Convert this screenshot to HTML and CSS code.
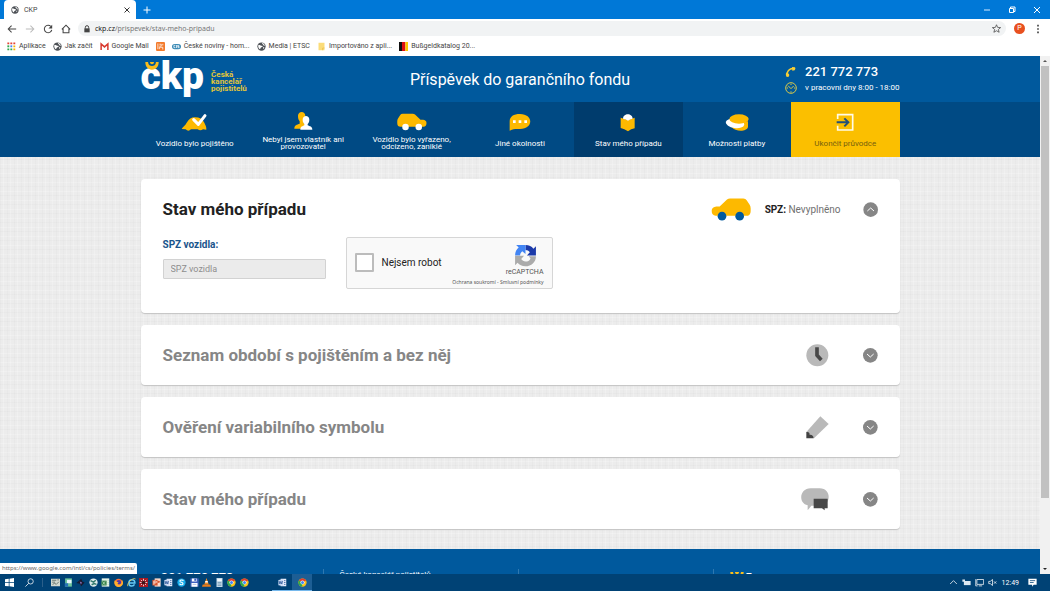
FILE: index.html
```html
<!DOCTYPE html>
<html lang="cs">
<head>
<meta charset="utf-8">
<title>CKP</title>
<link rel="stylesheet" href="styles.css">
</head>
<body>
<svg class="sprite" aria-hidden="true">
  <symbol id="globe" viewBox="0 0 24 24"><circle cx="12" cy="12" r="11" fill="#4d5156"/><path d="M4 7c5 0 5 3 9 3s2 4-1 4-2 5-5 5C4 16 2 11 4 7zM13 2c0 4 3 3 4 6s4 2 4 2c-1-4-4-7-8-8zM16 14l4 0-4 5z" fill="#fff"/></symbol>
  <symbol id="chrome" viewBox="0 0 24 24"><circle cx="12" cy="12" r="11" fill="#fbc116"/><path d="M12 12L2.500 6.500A11 11 0 0 1 21.500 6.500z" fill="#e33b2e"/><path d="M12 12L2.500 6.500A11 11 0 0 0 11 23z" fill="#2da94f"/><circle cx="12" cy="12" r="5.500" fill="#fff"/><circle cx="12" cy="12" r="4" fill="#4285f4"/></symbol>
  <symbol id="word" viewBox="0 0 24 24"><path d="M7 2h15v20H7z" fill="#e8eefb"/><path d="M1 5l13-2v18L1 19z" fill="#c9d8f2"/><path d="M3 8l2 8 2.500-7 2.500 7 2-8M16 7h4M16 12h4M16 17h4" fill="none" stroke="#2b579a" stroke-width="2"/></symbol>
  <symbol id="car" viewBox="0 0 120 68"><path d="M2 38c0-9 6-12 14-13h10L48 4q4-3 9-3h40q7 0 10 5l9 14q3 5 3 11v8q0 14-14 14H14Q2 52 2 38z" fill="#fdb900"/><circle cx="33" cy="54" r="13" fill="currentColor"/><circle cx="86" cy="54" r="13" fill="currentColor"/></symbol>
  <symbol id="down" viewBox="0 0 45 45"><circle cx="22" cy="22" r="22" fill="#868686"/><path d="M12 18l10 9 10-9" fill="none" stroke="#fff" stroke-width="3"/></symbol>
  <symbol id="smile" viewBox="0 0 42 24"><path d="M1 0h8c1 9 6 12 12 12s11-3 12-12h8c0 14-8 23-20 23S1 14 1 0z" fill="#f9bd1b"/><path d="M15 0h12c0 9-12 9-12 0z" fill="#f9bd1b"/></symbol>
</svg>

<header class="browser">
  <div class="tabstrip">
    <div class="tab"><svg class="i8"><use href="#globe"/></svg><span>CKP</span><button class="plain close" aria-label="Zavřít kartu"><svg class="i8" viewBox="0 0 16 16"><path d="M3 3l10 10M13 3L3 13" stroke="#333" stroke-width="2"/></svg></button></div>
    <button class="plain newtab" aria-label="Nová karta"><svg class="i8" viewBox="0 0 16 16"><path d="M8 1v14M1 8h14" stroke="#fff" stroke-width="2"/></svg></button>
    <div class="winbtns">
      <button class="plain" aria-label="Minimalizovat"><svg class="i8" viewBox="0 0 16 16"><path d="M2 8h12" stroke="#d8ebff" stroke-width="2"/></svg></button>
      <button class="plain" aria-label="Obnovit"><svg class="i8" viewBox="0 0 16 16"><path d="M3 5h8v8H3zM5 5V2h9v9h-3" fill="none" stroke="#fff" stroke-width="2"/></svg></button>
      <button class="plain" aria-label="Zavřít"><svg class="i8" viewBox="0 0 16 16"><path d="M2 2l12 12M14 2L2 14" stroke="#fff" stroke-width="2"/></svg></button>
    </div>
  </div>
  <div class="toolbar">
    <button class="plain" aria-label="Zpět"><svg class="i10" viewBox="0 0 24 24"><path d="M22 12H3M11 4l-8 8 8 8" fill="none" stroke="#444" stroke-width="2.500"/></svg></button>
    <button class="plain" aria-label="Vpřed"><svg class="i10" viewBox="0 0 24 24"><path d="M2 12h19M13 4l8 8-8 8" fill="none" stroke="#bbb" stroke-width="2.500"/></svg></button>
    <button class="plain" aria-label="Obnovit stránku"><svg class="i10" viewBox="0 0 24 24"><path d="M19 6a9 9 0 1 0 2 8" fill="none" stroke="#444" stroke-width="2.500"/><path d="M22 2v9h-9z" fill="#444"/></svg></button>
    <button class="plain" aria-label="Domů"><svg class="i10" viewBox="0 0 24 24"><path d="M2 13L12 3l10 10M5 11v10h14V11" fill="none" stroke="#444" stroke-width="2.500"/></svg></button>
    <div class="omnibox"><svg class="i8" viewBox="0 0 24 24"><path d="M4 10h16v12H4z" fill="#444"/><path d="M7 11V7a5 5 0 0 1 10 0v4" fill="none" stroke="#444" stroke-width="3"/></svg><span class="url"><b>ckp.cz</b>/prispevek/stav-meho-pripadu</span><svg class="i9" viewBox="0 0 24 24"><path d="M12 2l3 7 8 .6-6 5 2 7.400-7-4-7 4 2-7.400-6-5L9 9z" fill="none" stroke="#444" stroke-width="2"/></svg></div>
    <span class="avatar">P</span>
    <button class="plain" aria-label="Nabídka"><svg class="i10" viewBox="0 0 24 24"><path d="M10 2h4v4h-4zM10 10h4v4h-4zM10 18h4v4h-4z" fill="#444"/></svg></button>
  </div>
  <nav class="bookmarks" aria-label="Záložky">
    <a href="#"><svg class="i9" viewBox="0 0 24 24"><path d="M1 1h5v5H1zM9 1h5v5H9zM17 1h5v5h-5z" fill="#e34234"/><path d="M1 9h5v5H1z" fill="#2da94f"/><path d="M9 9h5v5H9z" fill="#4285f4"/><path d="M17 9h5v5h-5zM17 17h5v5h-5z" fill="#f5b400"/><path d="M1 17h5v5H1zM9 17h5v5H9z" fill="#2da94f"/></svg>Aplikace</a>
    <a href="#"><svg class="i9"><use href="#globe"/></svg>Jak začít</a>
    <a href="#"><svg class="i9" viewBox="0 0 24 24"><path d="M3 21V5l9 8 9-8v16" fill="none" stroke="#d93a2f" stroke-width="4"/></svg>Google Mail</a>
    <a href="#" aria-label="Záložka"><svg class="i9" viewBox="0 0 24 24"><rect width="24" height="24" rx="3" fill="#f37a2b"/><path d="M5 4v15M9 6h5v5H9M9 19v-5h9v6M18 5v4" fill="none" stroke="#fff" stroke-width="2"/></svg></a>
    <a href="#"><svg class="i9" viewBox="0 0 24 24"><rect y="5" width="24" height="14" rx="7" fill="#3889b5"/><path d="M9 9H5v6h4M12 8v8M19 9h-4v3h4v3h-4" fill="none" stroke="#fff" stroke-width="2"/></svg>České noviny - hom...</a>
    <a href="#"><svg class="i9"><use href="#globe"/></svg>Media | ETSC</a>
    <a href="#"><svg class="i9" viewBox="0 0 24 24"><path d="M4 2h16v20H4z" fill="#fbdc79"/><path d="M15 22v-6h5" fill="none" stroke="#e9bf4a" stroke-width="2"/></svg>Importováno z apli...</a>
    <a href="#"><svg class="i9" viewBox="0 0 24 24"><path d="M0 0h9v24H0z" fill="#111"/><path d="M8 0h9v24H8z" fill="#dd1111"/><path d="M17 0h7v24h-7z" fill="#fbc800"/></svg>Bußgeldkatalog 20...</a>
  </nav>
</header>

<div class="viewport">
  <div class="page">
    <header class="site">
      <div class="wrap site-row">
        <a class="logo" href="#"><span class="mark">ckp<svg class="caron"><use href="#smile"/></svg></span><span class="tagline">Česká<br>kancelář<br>pojistitelů</span></a>
        <h1>Příspěvek do garančního fondu</h1>
        <div class="contact">
          <svg class="i12" viewBox="0 0 36 36"><path d="M6 29C5 17 13 8 25 7" fill="none" stroke="#f7ce35" stroke-width="5"/><path d="M21 3l9 1q3 5-1 9l-7 1zM3 21l9 2q2 6-1 9l-6 1q-4-5-2-12z" fill="#f7ce35"/></svg><strong>221 772 773</strong>
          <svg class="i12" viewBox="0 0 36 36"><circle cx="18" cy="18" r="16" fill="none" stroke="#d5c74b" stroke-width="3"/><path d="M9 11l9 9 8-8M18 5v4M18 28v4M5 18h4M27 18h4" fill="none" stroke="#d5c74b" stroke-width="3"/></svg><span>v pracovní dny 8:00 - 18:00</span>
        </div>
      </div>
    </header>
    <nav class="mainnav" aria-label="Průvodce">
      <div class="wrap tabs">
        <a href="#"><svg class="w27" viewBox="0 0 81 60"><path d="M2 51c3-7 12-11 15-19Q28 15 42 16q20 0 28 16c3 7 7 12 6 21l-10-1q-8 6-16 0H30q-8 8-16 0z" fill="#fdb900"/><path d="M38 23l14 14 20-26" fill="none" stroke="#fff" stroke-width="9" stroke-linejoin="round" stroke-linecap="round"/></svg><span>Vozidlo bylo pojištěno</span></a>
        <a href="#"><svg class="w20" viewBox="0 0 60 60"><path d="M15 12c0-16 22-16 22 0 0 8-2 12-5 16v6l9 5v11H4c0-12 8-12 16-15v-7c-3-4-5-8-5-16z" fill="#fdb900"/><path d="M29 23c0-15 20-15 20 0 0 6-2 10-5 13v4c6 3 14 3 14 13H22c0-10 7-10 12-13v-4c-3-3-5-7-5-13z" fill="#fff"/></svg><span>Nebyl jsem vlastník ani provozovatel</span></a>
        <a href="#"><svg class="w30 flip white"><use href="#car"/></svg><span>Vozidlo bylo vyřazeno, odcizeno, zaniklé</span></a>
        <a href="#"><svg class="w22" viewBox="0 0 66 60"><path d="M33 6c40 0 42 44 0 45-14 0-18-1-31 5V29C2 13 14 6 33 6z" fill="#fdb900"/><path d="M12 25h8v8h-8zM29 25h8v8h-8zM46 25h8v8h-8z" fill="#fff"/></svg><span>Jiné okolnosti</span></a>
        <a href="#" class="active" aria-current="page"><svg class="w16" viewBox="0 0 48 60"><path d="M2 17l22 7 20-7v32q-11 2-20 9-11-7-22-10z" fill="#fdb900"/><path d="M9 20C9 2 38 2 38 20q-8 1-14 6-6-5-15-6z" fill="#fff"/></svg><span>Stav mého případu</span></a>
        <a href="#"><svg class="w24" viewBox="0 0 72 60"><path d="M14 28h55v17c-4 15-38 15-49 0z" fill="#fdb900"/><ellipse cx="30" cy="34" rx="28" ry="14" fill="#fff" transform="rotate(8 30 34)"/><ellipse cx="42" cy="21" rx="29" ry="14" fill="#fdb900"/></svg><span>Možnosti platby</span></a>
        <a href="#" class="exit"><svg class="w18" viewBox="0 0 54 60"><path d="M5 21V8h45v46H5V41" fill="none" stroke="#fffbe8" stroke-width="5"/><path d="M2 31h31M25 19l12 12-12 12" fill="none" stroke="#235078" stroke-width="6"/></svg><span>Ukončit průvodce</span></a>
      </div>
    </nav>
    <main class="wrap cards">
      <section class="card open">
        <div class="head">
          <h2>Stav mého případu</h2>
          <svg class="w40 blue"><use href="#car"/></svg>
          <span class="spz"><b>SPZ:</b> Nevyplněno</span>
          <button class="plain" aria-label="Sbalit"><svg class="i15 up"><use href="#down"/></svg></button>
        </div>
        <form class="body">
          <div class="field"><label for="spz">SPZ vozidla:</label><input id="spz" type="text" placeholder="SPZ vozidla"></div>
          <div class="captcha">
            <input type="checkbox" id="robot"><label for="robot">Nejsem robot</label>
            <div class="brand">
              <svg class="i23" viewBox="0 0 64 64"><path d="M32 3c10 0 17 4 22 10l7-7v26H36l8-9c-3-4-7-6-12-6z" fill="#1c3aa9"/><path d="M3 32C3 22 7 15 13 10L6 3h26v25l-9-8c-4 3-6 7-6 12z" fill="#4285f4"/><path d="M61 34c0 17-13 28-29 28-10 0-17-4-22-10l-7 7V33h25l-8 9c6 10 21 9 26-2l-5-6z" fill="#ababab"/></svg>
              <span>reCAPTCHA</span>
              <small><a href="#">Ochrana soukromí</a> - <a href="#">Smluvní podmínky</a></small>
            </div>
          </div>
        </form>
      </section>
      <section class="card"><div class="head"><h2>Seznam období s pojištěním a bez něj</h2><svg class="i23" viewBox="0 0 69 69"><circle cx="34" cy="34" r="33" fill="#b9b9b9"/><path d="M33 10v24l13 14" fill="none" stroke="#484848" stroke-width="11"/></svg><button class="plain" aria-label="Rozbalit"><svg class="i15"><use href="#down"/></svg></button></div></section>
      <section class="card"><div class="head"><h2>Ověření variabilního symbolu</h2><svg class="i23" viewBox="0 0 69 69"><path d="M1 48L43 1l25 23-44 43z" fill="#b9b9b9"/><path d="M1 48q10-2 10 8 11-1 12 11H1z" fill="#424242"/></svg><button class="plain" aria-label="Rozbalit"><svg class="i15"><use href="#down"/></svg></button></div></section>
      <section class="card"><div class="head"><h2>Stav mého případu</h2><svg class="w28" viewBox="0 0 84 69"><path d="M29 1h27c36 0 36 52 0 52H31L20 67V52C-9 46-5 1 29 1z" fill="#b9b9b9"/><path d="M38 32h42v29H71v6l-8-6H38z" fill="#484848"/></svg><button class="plain" aria-label="Rozbalit"><svg class="i15"><use href="#down"/></svg></button></div></section>
    </main>
    <footer class="foot">
      <div class="wrap footcols">
        <div class="col"><strong>221 772 773</strong></div>
        <div class="col"><span>Česká kancelář pojistitelů</span></div>
        <div class="col"></div>
        <div class="col"><a class="logo small" href="#"><span class="mark">ckp<svg class="caron"><use href="#smile"/></svg></span></a></div>
      </div>
    </footer>
  </div>
  <div class="scroll" aria-hidden="true">
    <svg viewBox="0 0 10 10"><path d="M3 6l2-2 2 2z" fill="#555"/></svg><span class="thumb"></span><svg viewBox="0 0 10 10"><path d="M3 4l2 2 2-2z" fill="#222"/></svg>
  </div>
  <div class="status">https://www.google.com/intl/cs/policies/terms/</div>
</div>

<footer class="taskbar">
  <div class="start">
    <svg class="i9" viewBox="0 0 24 24"><path d="M0 3l10-1v9H0zM12 2l12-2v11H12zM0 13h10v9L0 21zM12 13h12v11l-12-2z" fill="#fff"/></svg>
    <svg class="i9" viewBox="0 0 24 24"><circle cx="15" cy="9" r="7" fill="none" stroke="#fff" stroke-width="2"/><path d="M10 14l-9 9" stroke="#fff" stroke-width="2"/></svg>
  </div>
  <div class="pins">
    <svg class="i9" viewBox="0 0 24 24"><path d="M0 2h24v20H0z" fill="#d2d9d0"/><path d="M3 6h11M3 11h8M4 17l6-3 4 3 7-7M17 5h4" fill="none" stroke="#4f5e59" stroke-width="2"/></svg>
    <svg class="i9" viewBox="0 0 24 24"><path d="M3 1h18v22H3z" fill="#6dc49b"/><path d="M8 5h12v9H8z" fill="#e9f5ff"/><path d="M2 14h9v9H2z" fill="#2772b7"/></svg>
    <svg class="i9" viewBox="0 0 24 24"><path d="M1 13L14 2l3 7 6 3-9 10-4-7z" fill="#181a31"/><path d="M10 9l6 3-3 5z" fill="#8a71b8"/></svg>
    <svg class="i9" viewBox="0 0 24 24"><circle cx="12" cy="12" r="11" fill="#dfeceb"/><path d="M4 7l8 4 6-5M7 18l7-3 6 2" fill="none" stroke="#33796d" stroke-width="4"/></svg>
    <svg class="i9" viewBox="0 0 24 24"><path d="M2 1h20v22H2z" fill="#e6f4e8"/><path d="M1 7h14v13H1z" fill="#39834d"/><path d="M4 9l7 9M11 9l-7 9M17 7h4M17 12h4M17 17h4" stroke="#b7e0b9" stroke-width="2"/></svg>
    <svg class="i9" viewBox="0 0 24 24"><circle cx="12" cy="13" r="11" fill="#ff7139"/><circle cx="13" cy="11" r="6" fill="#5737a8"/><path d="M2 6l5 4 5 1-3 5c4 4 9 1 11-3l1-9c8 12-1 20-9 20C3 24-1 14 2 6z" fill="#ffb12a"/></svg>
    <svg class="i9" viewBox="0 0 24 24"><path d="M5 13h16c0-11-16-11-16 0s12 10 15 4" fill="none" stroke="#65c9f5" stroke-width="4"/><path d="M2 22C-2 14 18-4 23 3" fill="none" stroke="#f5cb46" stroke-width="2"/></svg>
    <svg class="i9" viewBox="0 0 24 24"><path d="M0 0h24v24H0z" fill="#a71921"/><path d="M12 2v20M2 12h20M5 5l14 14M19 5L5 19" stroke="#fff" stroke-width="2"/><circle cx="12" cy="12" r="5" fill="#401317"/></svg>
    <svg class="i9" viewBox="0 0 24 24"><path d="M7 1h16v22H7z" fill="#fbd8c9"/><path d="M1 5h14v15H1z" fill="#d8552e"/><path d="M5 18V8h4c4 0 4 5 0 5H5" fill="none" stroke="#fff" stroke-width="2"/><circle cx="18" cy="10" r="3" fill="#d8552e"/></svg>
    <svg class="i9"><use href="#word"/></svg>
    <svg class="i9" viewBox="0 0 24 24"><circle cx="12" cy="12" r="11" fill="#17adeb"/><path d="M17 8c-2-4-10-3-9 1 1 3 8 2 8 6s-8 4-9 0" fill="none" stroke="#fff" stroke-width="3"/></svg>
    <svg class="i9" viewBox="0 0 24 24"><path d="M1 1h22v22H1z" fill="#3f61bf"/><path d="M5 1h13v8H5zM4 13h16v10H4z" fill="#fff"/><path d="M12 2h4v5h-4zM7 17h10" fill="#3f61bf" stroke="#3f61bf"/></svg>
    <svg class="i9" viewBox="0 0 24 24"><path d="M12 0l6 17H6z" fill="#f28b22"/><path d="M9 8h6l1 4H8z" fill="#fff"/><path d="M2 17h20l2 6H0z" fill="#e77c19"/></svg>
    <svg class="i9" viewBox="0 0 24 24"><path d="M4 0h16v24H4z" fill="#c3d9e8"/><path d="M6 3h12v5H6z" fill="#f5fbff"/><path d="M7 12h10M7 16h10M7 20h10" stroke="#6c94b0" stroke-width="2"/></svg>
    <svg class="i9"><use href="#chrome"/></svg>
    <svg class="i9"><use href="#chrome"/></svg>
  </div>
  <div class="running">
    <span class="app"><svg class="i9"><use href="#word"/></svg></span>
    <span class="app current"><svg class="i9"><use href="#chrome"/></svg></span>
  </div>
  <div class="tray">
    <svg class="i9" viewBox="0 0 24 24"><path d="M3 16l9-9 9 9" fill="none" stroke="#fff" stroke-width="2"/></svg>
    <svg class="i9" viewBox="0 0 24 24"><path d="M5 8h18v11H5z" fill="#dce8f2"/><path d="M1 4h7v6H1z" fill="#dce8f2"/></svg>
    <svg class="i9" viewBox="0 0 24 24"><path d="M5 4h18v13H5zM10 21h9M2 3v18h5" fill="none" stroke="#fff" stroke-width="2"/></svg>
    <svg class="i9" viewBox="0 0 24 24"><path d="M2 9h4l6-5v16l-6-5H2zM16 9l6 6M22 9l-6 6" fill="none" stroke="#fff" stroke-width="2"/></svg>
    <time>12:49</time>
    <svg class="i9" viewBox="0 0 24 24"><path d="M1 2h22v16h-8l-4 5v-5H1z" fill="#fff"/><path d="M5 7h14M5 12h10" stroke="#004275" stroke-width="2"/></svg>
  </div>
</footer>
</body>
</html>
```
FILE: styles.css
```css
* { box-sizing: border-box; }
body {
  margin: 0;
  height: 100vh;
  display: flex;
  flex-direction: column;
  overflow: hidden;
  font-family: Roboto, "Liberation Sans", sans-serif;
  color: #222;
}
a { color: inherit; text-decoration: none; }
svg { display: block; flex: none; }
h1, h2 { margin: 0; }
.sprite { position: absolute; width: 0; height: 0; }
.plain { border: 0; padding: 0; background: none; display: block; }

.i8 { width: 8px; height: 8px; }
.i9 { width: 9px; height: 9px; }
.i10 { width: 10px; height: 10px; }
.i12 { width: 12px; height: 12px; }
.i15 { width: 15px; height: 15px; }
.i23 { width: 23px; height: 23px; }
.w16 { width: 16px; height: 20px; }
.w18 { width: 18px; height: 20px; }
.w20 { width: 20px; height: 20px; }
.w22 { width: 22px; height: 20px; }
.w24 { width: 24px; height: 20px; }
.w27 { width: 27px; height: 20px; }
.w28 { width: 28px; height: 23px; }
.w30 { width: 30px; height: 20px; }
.w40 { width: 40px; height: 23px; }
.flip { transform: scaleX(-1); }
.up { transform: rotate(180deg); }
.white { color: #fff; }
.blue { color: #00599d; }

/* Browser frame */
.browser { flex: none; background: #fff; font-size: 7px; color: #444; }
.tabstrip { display: flex; align-items: center; height: 19px; background: #0078d7; }
.tab {
  display: flex;
  align-items: center;
  align-self: stretch;
  gap: 5px;
  width: 132px;
  margin-left: 4px;
  padding: 0 5px 0 7px;
  border-radius: 4px 4px 0 0;
  background: #fff;
}
.close { margin-left: auto; }
.newtab { margin-left: 7px; }
.winbtns { display: flex; gap: 17px; margin-left: auto; padding-right: 9px; }
.toolbar { display: flex; align-items: center; gap: 8px; height: 19px; padding: 0 7px; }
.omnibox {
  display: flex;
  align-items: center;
  flex: 1;
  gap: 4px;
  height: 15px;
  margin-left: -1px;
  padding: 0 5px;
  border-radius: 8px;
  background: #f1f3f4;
}
.url { flex: 1; font-family: "Noto Sans", sans-serif; color: #777; }
.url b { font-weight: 400; color: #222; }
.avatar {
  width: 11px;
  border-radius: 50%;
  background: #e8501f;
  color: #fff;
  line-height: 11px;
  text-align: center;
}
.bookmarks { display: flex; align-items: center; gap: 7px; height: 18px; padding: 0 7px 2px; white-space: nowrap; }
.bookmarks a { display: flex; align-items: center; gap: 3px; }

/* Page */
.viewport { position: relative; flex: 1; min-height: 0; display: flex; }
.page {
  flex: 1;
  overflow: hidden;
  background-color: #ececec;
  background-image:
    repeating-linear-gradient(90deg, rgba(0,0,0,.015) 0 1px, transparent 1px 3px, rgba(255,255,255,.2) 3px 4px, transparent 4px 7px),
    repeating-linear-gradient(0deg, rgba(0,0,0,.015) 0 1px, transparent 1px 4px, rgba(255,255,255,.2) 4px 5px, transparent 5px 9px);
}
.wrap { max-width: 759px; margin: 0 auto; }
.site { background: #00599d; color: #fff; }
.site-row { display: grid; grid-template-columns: 1fr auto 1fr; align-items: center; height: 46px; }
.logo { display: flex; align-items: center; gap: 7px; }
.mark { position: relative; padding-bottom: 6px; font-size: 39px; font-weight: 900; line-height: 38px; color: #fff; }
.caron { position: absolute; left: 4px; top: 5px; width: 14px; height: 8px; }
.tagline { padding-top: 4px; font-size: 8px; font-weight: 700; line-height: 7px; color: #e0c53a; }
h1 { font-size: 16px; font-weight: 400; }
.contact {
  justify-self: end;
  display: grid;
  grid-template-columns: auto auto;
  align-items: center;
  gap: 2px 8px;
}
.contact strong { font-size: 13px; font-weight: 500; line-height: 16px; }
.contact span { font-size: 8px; line-height: 12px; }

.mainnav { background: #004a84; color: #fff; }
.tabs { display: grid; grid-template-columns: repeat(7, 1fr); }
.tabs a {
  display: flex;
  flex-direction: column;
  align-items: center;
  gap: 4px;
  height: 55px;
  padding: 10px 10px 0;
}
.tabs span {
  display: flex;
  align-items: center;
  height: 14px;
  font-size: 8px;
  line-height: 7px;
  text-align: center;
}
.tabs .active { background: #003c6d; }
.tabs .exit { background: #fbbf00; color: #75600f; }

.cards { display: flex; flex-direction: column; gap: 12px; padding: 22px 0 20px; }
.card { padding: 0 22px; border-radius: 4px; background: #fff; box-shadow: 0 1px 1px #c4c4c4; }
.head { display: flex; align-items: center; gap: 34px; height: 60px; }
.head h2 { flex: 1; font-size: 17px; font-weight: 700; color: #868686; }
.open .head { height: 58px; gap: 22px; padding-top: 2px; }
.open .head h2 { color: #222; }
.open .w40 { margin-right: -8px; }
.spz { font-size: 10px; color: #707070; }
.spz b { font-weight: 700; color: #222; }
.body { display: flex; gap: 20px; padding-bottom: 24px; }
.field { display: flex; flex-direction: column; gap: 7px; width: 163px; }
.field label { padding-top: 1px; font-size: 10px; font-weight: 700; line-height: 14px; color: #1a558c; }
.field input {
  width: 100%;
  height: 20px;
  padding: 0 7px;
  border: 1px solid #d2d2d2;
  border-radius: 1px;
  background: #ebebeb;
  font: 9px Roboto, sans-serif;
}
.field input::placeholder { color: #8e8e8e; }
.captcha {
  display: flex;
  align-items: center;
  gap: 8px;
  width: 207px;
  height: 52px;
  padding: 0 8px 2px;
  border: 1px solid #d6d6d6;
  border-radius: 2px;
  background: #f9f9f9;
  font-size: 10px;
  white-space: nowrap;
}
.captcha input { appearance: none; flex: none; width: 19px; height: 19px; margin: 0; border: 2px solid #bcbcbc; border-radius: 1px; background: #fff; }
.brand { display: flex; flex-direction: column; align-items: flex-end; flex: 1; width: 0; padding-top: 6px; color: #555; }
.brand svg { margin-right: 7px; }
.brand span { font-size: 7px; line-height: 11px; }
.brand small { font-family: "Noto Sans", sans-serif; font-size: 5px; line-height: 8px; }

.foot { background: #00599d; color: #fff; }
.footcols { display: grid; grid-template-columns: 182px 195px 195px 1fr; padding-top: 20px; }
.col { height: 60px; padding-left: 16px; border-left: 1px solid #2f78b0; font-size: 8px; }
.col:first-child { border-left: 0; padding-left: 20px; }
.col strong, .col span { display: block; }
.col strong { font-size: 13px; font-weight: 500; line-height: 18px; }
.col span { line-height: 12px; }
.small .mark { padding: 0; font-size: 30px; line-height: 32px; }
.small .caron { left: 0; top: 3px; }

.scroll { display: flex; flex-direction: column; width: 10px; background: #f1f1f1; }
.scroll svg { width: 10px; height: 10px; }
.scroll span { flex: 1; margin: 0 1px 66px; background: #c1c1c1; }
.status {
  position: absolute;
  left: 0;
  bottom: 0;
  padding: 0 2px;
  border-radius: 0 2px 0 0;
  background: #fff;
  color: #666;
  font-family: "Noto Sans", sans-serif;
  font-size: 6px;
  line-height: 11px;
  white-space: nowrap;
}

/* Taskbar */
.taskbar { display: flex; align-items: center; flex: none; height: 17px; background: #004275; color: #fff; font-size: 7px; }
.start { display: flex; gap: 11px; padding: 0 8px 0 5px; border-right: 1px solid #2b5f8a; }
.pins { display: grid; grid-template-columns: repeat(16, 9px); justify-content: space-between; width: 212px; padding: 0 6px 0 8px; }
.running { display: flex; margin-left: 17px; height: 100%; }
.app { display: flex; align-items: center; justify-content: center; width: 20px; border-bottom: 1px solid #76b9ed; }
.current { background: #1d5e94; }
.tray { display: flex; align-items: center; gap: 4px; margin-left: auto; padding-right: 13px; }
.tray time { margin: 0 5px 0 1px; }
```
